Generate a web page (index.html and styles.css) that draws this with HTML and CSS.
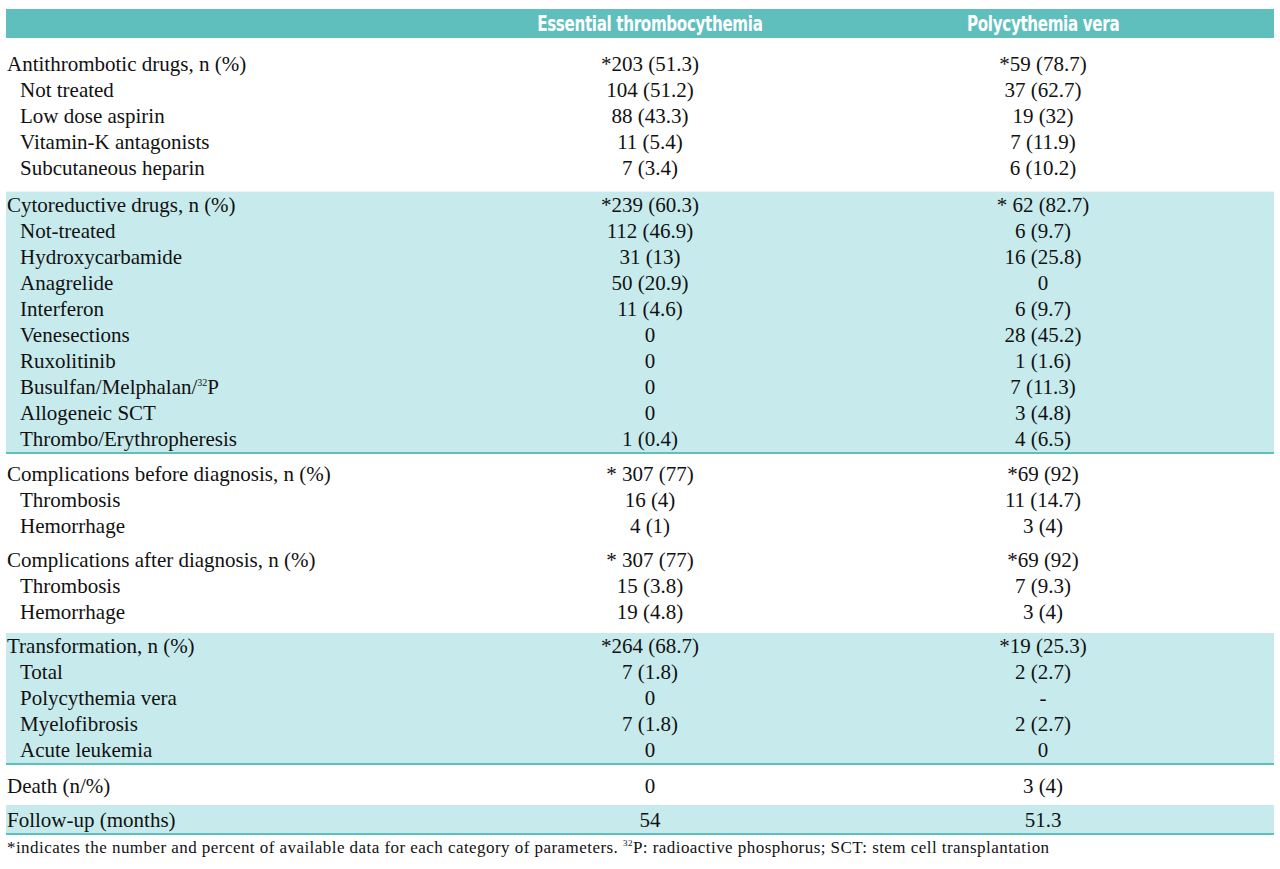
FILE: index.html
```html
<!DOCTYPE html>
<html lang="en">
<head>
<meta charset="utf-8">
<title>Therapy, complications and outcome</title>
<link rel="stylesheet" href="styles.css">
</head>
<body>
<div class="page">
  <div class="caption"><div class="caption-text">Table 3. Therapy, complications, and outcome of study population.</div></div>
  <div class="thead">
    <div></div>
    <div class="th"><span class="th-text">Essential thrombocythemia</span></div>
    <div class="th"><span class="th-text">Polycythemia vera</span></div>
    <div></div>
  </div>

  <div class="group g-first">
    <div class="row"><div class="lbl">Antithrombotic drugs, n (%)</div><div class="val">*203 (51.3)</div><div class="val">*59 (78.7)</div></div>
    <div class="row"><div class="lbl sub">Not treated</div><div class="val">104 (51.2)</div><div class="val">37 (62.7)</div></div>
    <div class="row"><div class="lbl sub">Low dose aspirin</div><div class="val">88 (43.3)</div><div class="val">19 (32)</div></div>
    <div class="row"><div class="lbl sub">Vitamin-K antagonists</div><div class="val">11 (5.4)</div><div class="val">7 (11.9)</div></div>
    <div class="row"><div class="lbl sub">Subcutaneous heparin</div><div class="val">7 (3.4)</div><div class="val">6 (10.2)</div></div>
  </div>

  <div class="group shaded">
    <div class="row"><div class="lbl">Cytoreductive drugs, n (%)</div><div class="val">*239 (60.3)</div><div class="val">* 62 (82.7)</div></div>
    <div class="row"><div class="lbl sub">Not-treated</div><div class="val">112 (46.9)</div><div class="val">6 (9.7)</div></div>
    <div class="row"><div class="lbl sub">Hydroxycarbamide</div><div class="val">31 (13)</div><div class="val">16 (25.8)</div></div>
    <div class="row"><div class="lbl sub">Anagrelide</div><div class="val">50 (20.9)</div><div class="val">0</div></div>
    <div class="row"><div class="lbl sub">Interferon</div><div class="val">11 (4.6)</div><div class="val">6 (9.7)</div></div>
    <div class="row"><div class="lbl sub">Venesections</div><div class="val">0</div><div class="val">28 (45.2)</div></div>
    <div class="row"><div class="lbl sub">Ruxolitinib</div><div class="val">0</div><div class="val">1 (1.6)</div></div>
    <div class="row"><div class="lbl sub">Busulfan/Melphalan/<sup>32</sup>P</div><div class="val">0</div><div class="val">7 (11.3)</div></div>
    <div class="row"><div class="lbl sub">Allogeneic SCT</div><div class="val">0</div><div class="val">3 (4.8)</div></div>
    <div class="row"><div class="lbl sub">Thrombo/Erythropheresis</div><div class="val">1 (0.4)</div><div class="val">4 (6.5)</div></div>
  </div>
  <div class="rule"></div>

  <div class="group g-plain">
    <div class="row"><div class="lbl">Complications before diagnosis, n (%)</div><div class="val">* 307 (77)</div><div class="val">*69 (92)</div></div>
    <div class="row"><div class="lbl sub">Thrombosis</div><div class="val">16 (4)</div><div class="val">11 (14.7)</div></div>
    <div class="row"><div class="lbl sub">Hemorrhage</div><div class="val">4 (1)</div><div class="val">3 (4)</div></div>
  </div>

  <div class="group g-plain g-tail">
    <div class="row"><div class="lbl">Complications after diagnosis, n (%)</div><div class="val">* 307 (77)</div><div class="val">*69 (92)</div></div>
    <div class="row"><div class="lbl sub">Thrombosis</div><div class="val">15 (3.8)</div><div class="val">7 (9.3)</div></div>
    <div class="row"><div class="lbl sub">Hemorrhage</div><div class="val">19 (4.8)</div><div class="val">3 (4)</div></div>
  </div>

  <div class="group shaded">
    <div class="row"><div class="lbl">Transformation, n (%)</div><div class="val">*264 (68.7)</div><div class="val">*19 (25.3)</div></div>
    <div class="row"><div class="lbl sub">Total</div><div class="val">7 (1.8)</div><div class="val">2 (2.7)</div></div>
    <div class="row"><div class="lbl sub">Polycythemia vera</div><div class="val">0</div><div class="val">-</div></div>
    <div class="row"><div class="lbl sub">Myelofibrosis</div><div class="val">7 (1.8)</div><div class="val">2 (2.7)</div></div>
    <div class="row"><div class="lbl sub">Acute leukemia</div><div class="val">0</div><div class="val">0</div></div>
  </div>
  <div class="rule"></div>

  <div class="group g-single">
    <div class="row"><div class="lbl">Death (n/%)</div><div class="val">0</div><div class="val">3 (4)</div></div>
  </div>

  <div class="group shaded g-last">
    <div class="row"><div class="lbl">Follow-up (months)</div><div class="val">54</div><div class="val">51.3</div></div>
  </div>
  <div class="rule"></div>

  <p class="note">*indicates the number and percent of available data for each category of parameters. <sup>32</sup>P: radioactive phosphorus; SCT: stem cell transplantation</p>
</div>
</body>
</html>
```
FILE: styles.css
```css
html, body {
  margin: 0;
  padding: 0;
  background: #ffffff;
}

.page {
  padding: 0 6px;
  color: #111111;
  font-family: "Liberation Serif", "Times New Roman", serif;
}

.caption {
  height: 9px;
  overflow: hidden;
  padding-left: 286px;
}

.caption-text {
  margin-top: -21px;
  font-family: "DejaVu Sans Condensed", "Liberation Sans", sans-serif;
  font-weight: bold;
  font-size: 21px;
  line-height: 20px;
  color: #111111;
  white-space: nowrap;
}

.thead,
.row {
  display: grid;
  grid-template-columns: 444px 400px 386px 1fr;
}

.thead {
  background: #5fbfbd;
  height: 29px;
  align-items: center;
}

.th {
  text-align: center;
  color: #ffffff;
  font-family: "DejaVu Sans Condensed", "Liberation Sans", sans-serif;
  font-weight: bold;
  font-size: 21px;
  line-height: 30px;
}

.th-text {
  display: inline-block;
  transform: scaleX(0.8);
  letter-spacing: -0.4px;
}

.row {
  height: 26px;
  font-size: 21px;
  line-height: 26px;
}

.lbl {
  padding-left: 1px;
  white-space: nowrap;
}

.lbl.sub {
  padding-left: 14px;
}

.val {
  text-align: center;
  white-space: nowrap;
}

sup {
  font-size: 10px;
  line-height: 0;
  vertical-align: 8px;
}

.group.shaded {
  background: #c7ebec;
}

.g-first {
  padding: 13px 0 10px;
  border-bottom: 1px solid #eef3f3;
}

.g-plain {
  padding: 7px 0 1px;
}

.g-tail {
  padding-bottom: 8px;
}

.g-single {
  padding: 8px 0 6px;
}

.g-last {
  padding: 2px 0 0;
}

.rule {
  height: 2px;
  background: #5fbfbd;
}

.note {
  margin: 2px 0 0;
  padding-left: 1px;
  font-size: 17px;
  letter-spacing: 0.45px;
  line-height: 22px;
  white-space: nowrap;
}

.note sup {
  font-size: 9px;
  vertical-align: 7px;
}
```
